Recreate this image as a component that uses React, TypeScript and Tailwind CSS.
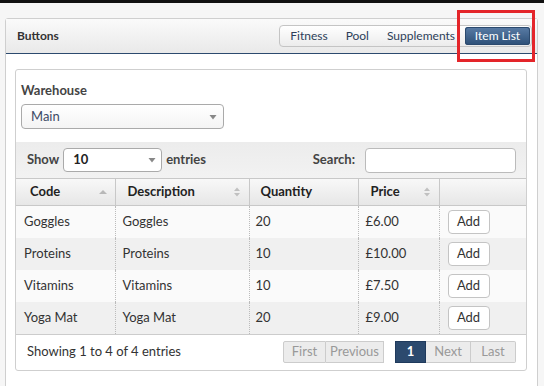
import React from "react";

const rows = [
  ["Goggles", "Goggles", "20", "£6.00"],
  ["Proteins", "Proteins", "10", "£10.00"],
  ["Vitamins", "Vitamins", "10", "£7.50"],
  ["Yoga Mat", "Yoga Mat", "20", "£9.00"],
];

function SortIcon({ up }: { up?: boolean }) {
  if (up)
    return (
      <svg width="8" height="8" viewBox="0 0 8 8" className="absolute right-[8px] top-[9px]">
        <path d="M0 6 L4 2 L8 6 Z" fill="#b8b8b8" />
      </svg>
    );
  return (
    <svg width="8" height="12" viewBox="0 0 8 12" className="absolute right-[8px] top-[7px]">
      <path d="M1 5 L4 1.5 L7 5 Z" fill="#c0c0c0" />
      <path d="M1 7 L4 10.5 L7 7 Z" fill="#c0c0c0" />
    </svg>
  );
}

function Caret() {
  return (
    <svg width="8" height="6" viewBox="0 0 8 6">
      <path d="M0.5 1 L7.5 1 L4 5.5 Z" fill="#888" />
    </svg>
  );
}

export default function App() {
  return (
    <div
      className="relative w-[544px] h-[386px] overflow-hidden bg-[#f6f6f6] text-[#333]"
      style={{ fontFamily: "Lato, 'Open Sans', sans-serif" }}
    >
      <div className="h-[3px] bg-[#111]" />
      <div className="pl-[5px] pr-[6px] pt-[15px]">
        <div className="h-[380px] rounded-[3px] border border-[#cfcfcf] bg-white">
          {/* header */}
          <div className="flex h-[35px] items-center justify-between border-b border-[#2c4a6e] bg-gradient-to-b from-[#fafafa] to-[#e9e9e9] pl-[11px] pr-[5px]">
            <span className="text-[12px] font-bold text-[#333]">Buttons</span>
            <div className="flex h-[22px] items-stretch rounded-[4px] border border-[#c4c4c4] bg-gradient-to-b from-white to-[#ececec] p-[1px] text-[12px] text-[#2d3e59]">
              <span className="flex items-center px-[9px]">Fitness</span>
              <span className="flex items-center px-[9px]">Pool</span>
              <span className="flex items-center pl-[9px] pr-[10px]">Supplements</span>
              <span className="flex w-[65px] items-center justify-center rounded-[3px] bg-gradient-to-b from-[#5a7ca6] to-[#2d5077] text-white shadow-[inset_0_0_0_1px_#2c4a6e]">
                Item List
              </span>
            </div>
          </div>
          {/* inner panel */}
          <div className="pl-[9px] pr-[10px] pt-[15px]">
            <div className="rounded-[3px] border border-[#cfcfcf] bg-white">
              <div className="px-[5px] pt-[11px] pb-[13px]">
                <div className="text-[13px] font-bold leading-[18px] text-[#444]">Warehouse</div>
                <div className="mt-[5px] flex h-[25px] w-[203px] items-center justify-between rounded-[4px] border border-[#aaa] bg-gradient-to-b from-white to-[#f4f4f4] pl-[9px] pr-[6px] text-[13px] text-[#3c4a66]">
                  <span>Main</span>
                  <Caret />
                </div>
              </div>
              {/* toolbar */}
              <div className="flex h-[36px] items-center justify-between bg-gradient-to-b from-[#ececec] to-[#f2f2f2] pl-[11px] pr-[10px] text-[13px] font-bold text-[#444]">
                <div className="flex items-center gap-[4px]">
                  <span>Show</span>
                  <div className="flex h-[24px] w-[99px] items-center justify-between rounded-[4px] border border-[#aaa] bg-white pl-[9px] pr-[5px] text-[#222]">
                    <span>10</span>
                    <Caret />
                  </div>
                  <span>entries</span>
                </div>
                <div className="flex items-center gap-[10px]">
                  <span>Search:</span>
                  <div className="h-[25px] w-[151px] rounded-[4px] border border-[#bbb] bg-white" />
                </div>
              </div>
              {/* table */}
              <table className="w-full border-collapse text-[13px]">
                <thead>
                  <tr className="h-[27px] bg-gradient-to-b from-[#f8f8f8] to-[#e6e6e6] text-left font-bold text-[#222]">
                    <th className="relative w-[99px] border-t border-r border-b border-[#c8c8c8] pl-[14px] font-bold">
                      Code
                      <SortIcon up />
                    </th>
                    <th className="relative w-[134px] border border-[#c8c8c8] pl-[12px] font-bold">
                      Description
                      <SortIcon />
                    </th>
                    <th className="relative w-[109px] border border-[#c8c8c8] pl-[11px] font-bold">Quantity</th>
                    <th className="relative w-[81px] border border-[#c8c8c8] pl-[12px] font-bold">
                      Price
                      <SortIcon />
                    </th>
                    <th className="border-t border-l border-b border-[#c8c8c8]" />
                  </tr>
                </thead>
                <tbody>
                  {rows.map((r, i) => (
                    <tr key={i} className={`h-[32px] ${i % 2 === 1 ? "bg-[#f0f0f0]" : "bg-[#fafafa]"}`}>
                      <td className="border-r border-dotted border-[#bbb] pl-[8px]">{r[0]}</td>
                      <td className="border-r border-dotted border-[#bbb] pl-[7px]">{r[1]}</td>
                      <td className="border-r border-dotted border-[#bbb] pl-[6px]">{r[2]}</td>
                      <td className="border-r border-dotted border-[#bbb] pl-[7px]">{r[3]}</td>
                      <td className="pl-[8px]">
                        <span className="inline-flex h-[24px] w-[42px] items-center justify-center rounded-[4px] border border-[#c4c4c4] bg-white text-[#333]">
                          Add
                        </span>
                      </td>
                    </tr>
                  ))}
                </tbody>
              </table>
              {/* footer */}
              <div className="flex h-[36px] items-center justify-between border-t border-[#ccc] pl-[11px] pr-[10px] text-[13px]">
                <span>Showing 1 to 4 of 4 entries</span>
                <div className="flex items-center text-[13px] text-[#999]">
                  <span className="flex h-[22px] w-[43px] items-center justify-center rounded-l-[2px] border border-[#ccc] bg-[#ececec]">First</span>
                  <span className="flex h-[22px] w-[58px] items-center justify-center border border-l-0 border-[#ccc] bg-[#ececec]">Previous</span>
                  <span className="ml-[11px] flex h-[22px] w-[31px] items-center justify-center border border-[#1f3a5c] bg-[#2c4a6e] font-bold text-white">1</span>
                  <span className="flex h-[22px] w-[45px] items-center justify-center border border-l-0 border-[#ccc] bg-[#ececec]">Next</span>
                  <span className="flex h-[22px] w-[45px] items-center justify-center rounded-r-[2px] border border-l-0 border-[#ccc] bg-[#ececec]">Last</span>
                </div>
              </div>
            </div>
          </div>
        </div>
      </div>
      {/* annotation */}
      <div className="absolute left-[457px] top-[10px] h-[52px] w-[78px] border-[3px] border-[#e4252a]" />
    </div>
  );
}
